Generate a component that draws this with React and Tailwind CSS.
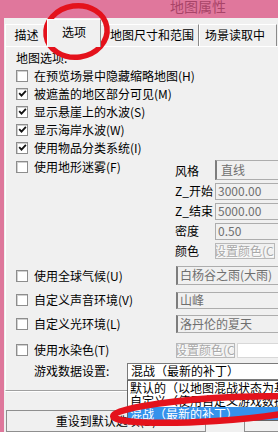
import React from "react";

function Check({ checked }) {
  return (
    <span className="flex h-[12px] w-[12px] shrink-0 items-center justify-center border border-[#8d8d8d] bg-white shadow-[inset_1px_1px_0_#d0d0d0]">
      {checked && (
        <svg width="9" height="9" viewBox="0 0 9 9" className="block">
          <path d="M1.2 4.2 L3.5 6.7 L7.9 1.8" fill="none" stroke="#111" strokeWidth="1.8" />
        </svg>
      )}
    </span>
  );
}

function CheckRow({ checked, label, className = "" }) {
  return (
    <div className={`flex h-[18px] items-center gap-[6px] ${className}`}>
      <Check checked={checked} />
      <span className="whitespace-nowrap">{label}</span>
    </div>
  );
}

function Field({ children, combo, className = "" }) {
  return (
    <div
      className={`flex items-center whitespace-nowrap border border-[#adadad] bg-[#f0f0f0] pl-[2px] text-[#6f6f6f] ${
        combo ? "border-l-2 border-l-[#7d7d7d]" : ""
      } ${className}`}
    >
      {children}
    </div>
  );
}

function ColorBtn({ className = "" }) {
  return (
    <div
      className={`flex items-center overflow-hidden whitespace-nowrap border border-[#b8b8b8] bg-[#f0f0f0] text-[#a8a8a8] [text-shadow:1px_1px_0_#ffffff] ${className}`}
    >
      <span className="-ml-[2px]">设置颜色(C)</span>
    </div>
  );
}

export default function App() {
  return (
    <div className="relative h-[432px] w-[278px] overflow-hidden bg-[#e0779c] font-['Noto_Sans_CJK_SC',sans-serif] text-[12px] text-black">
      {/* title bar */}
      <div className="h-[18px] overflow-hidden pl-[170px]">
        <div className="text-[14px] leading-[13px] text-[#a84468]">地图属性</div>
      </div>

      <div className="flex h-[414px]">
        <div className="w-[4px] shrink-0 bg-[#de779b]" />
        <div className="flex w-[320px] shrink-0 flex-col bg-[#f0f0f0] pl-[1px]">
          {/* tabs */}
          <div className="flex h-[28px] items-end">
            <div className="flex h-[22px] w-[42px] items-center justify-center border-l border-t border-white">
              描述
            </div>
            <div className="relative z-10 -mb-[1px] flex h-[28px] w-[54px] items-center justify-center border-l border-r border-t border-white border-r-[#8a8a8a] bg-[#f0f0f0] pb-[2px]">
              选项
            </div>
            <div className="flex h-[22px] w-[98px] items-center border-r border-t border-white border-r-[#8a8a8a] pl-[9px]">
              地图尺寸和范围
            </div>
            <div className="flex h-[22px] w-[78px] items-center border-l border-r border-t border-white border-r-[#8a8a8a] pl-[5px]">
              场景读取中
            </div>
          </div>

          {/* panel */}
          <div className="flex h-[347px] flex-col border-l border-t border-b border-white border-b-[#a0a0a0] pl-[10px]">
            <div className="flex h-[20px] items-center pt-[2px]">地图选项:</div>
            <CheckRow label="在预览场景中隐藏缩略地图(H)" />
            <CheckRow checked label="被遮盖的地区部分可见(M)" />
            <CheckRow checked label="显示悬崖上的水波(S)" />
            <CheckRow checked label="显示海岸水波(W)" />
            <CheckRow checked label="使用物品分类系统(I)" />

            {/* fog */}
            <div className="flex">
              <div className="w-[159px] shrink-0 pt-[1px]">
                <CheckRow label="使用地形迷雾(F)" />
              </div>
              <div className="flex flex-col gap-[3px] pt-[3px]">
                <div className="flex h-[20px] items-center">
                  <span className="w-[40px] pt-[3px]">风格</span>
                  <Field combo className="h-[20px] w-[80px] pl-[4px]">直线</Field>
                </div>
                <div className="flex h-[17px] items-center">
                  <span className="w-[40px]">Z_开始</span>
                  <Field className="h-[17px] w-[80px]">3000.00</Field>
                </div>
                <div className="flex h-[17px] items-center">
                  <span className="w-[40px]">Z_结束</span>
                  <Field className="h-[17px] w-[80px]">5000.00</Field>
                </div>
                <div className="flex h-[17px] items-center">
                  <span className="w-[40px]">密度</span>
                  <Field className="h-[17px] w-[80px]">0.50</Field>
                </div>
                <div className="flex h-[16px] items-center">
                  <span className="w-[40px]">颜色</span>
                  <ColorBtn className="h-[16px] w-[60px]" />
                </div>
              </div>
            </div>

            {/* lower rows */}
            <div className="mt-[7px] flex h-[19px] items-center">
              <div className="w-[160px] shrink-0 pt-[2px]">
                <CheckRow label="使用全球气候(U)" />
              </div>
              <Field combo className="h-[19px] w-[120px]">白杨谷之雨(大雨)</Field>
            </div>
            <div className="mt-[7px] flex h-[17px] items-center">
              <div className="w-[160px] shrink-0">
                <CheckRow label="自定义声音环境(V)" />
              </div>
              <Field combo className="h-[17px] w-[120px]">山峰</Field>
            </div>
            <div className="mt-[6px] flex h-[18px] items-center">
              <div className="w-[160px] shrink-0">
                <CheckRow label="自定义光环境(L)" />
              </div>
              <Field combo className="h-[18px] w-[120px]">洛丹伦的夏天</Field>
            </div>
            <div className="mt-[10px] flex h-[15px] items-center">
              <div className="w-[160px] shrink-0">
                <CheckRow label="使用水染色(T)" />
              </div>
              <ColorBtn className="h-[15px] w-[59px]" />
              <div className="ml-[2px] h-[15px] w-[50px] border border-[#d8d8d8] bg-white" />
            </div>
            <div className="mt-[5px] flex h-[17px] items-center">
              <div className="w-[111px] shrink-0 pl-[18px]">游戏数据设置:</div>
              <div className="flex h-[17px] w-[170px] items-center border border-[#7a7a7a] bg-white pl-[3px] whitespace-nowrap">
                混战（最新的补丁）
              </div>
            </div>
          </div>
          <div className="h-[1px] bg-white" />

          {/* buttons */}
          <div className="mt-[18px] flex gap-[38px] pl-[1px]">
            <div className="flex h-[22px] w-[200px] items-start justify-center border border-[#8f8f8f] bg-[#f0f0f0] leading-[19px]">
              重设到默认选项(D)
            </div>
            <div className="h-[22px] w-[60px] border border-[#8f8f8f] bg-[#f0f0f0]" />
          </div>
        </div>
      </div>

      {/* open dropdown list */}
      <div className="absolute left-[127px] top-[380px] w-[170px] border border-[#646464] bg-white leading-[13px]">
        <div className="h-[13px] whitespace-nowrap pl-[2px]">默认的（以地图混战状态为基础）</div>
        <div className="h-[13px] whitespace-nowrap pl-[2px]">自定义（使用自定义游戏数据）</div>
        <div className="h-[13px] whitespace-nowrap bg-[#3592ec] pl-[2px] text-white">混战（最新的补丁）</div>
      </div>

      {/* red annotation marks */}
      <svg className="pointer-events-none absolute left-0 top-0" width="278" height="432" viewBox="0 0 278 432">
        <ellipse cx="76.5" cy="31.5" rx="30.7" ry="25.7" transform="rotate(-8 76.5 31.5)" fill="none" stroke="#e4121c" strokeWidth="5.5" />
        <ellipse cx="215" cy="409.5" rx="102" ry="11.5" transform="rotate(-3.8 215 409.5)" fill="none" stroke="#e4121c" strokeWidth="6.5" />
      </svg>
    </div>
  );
}
